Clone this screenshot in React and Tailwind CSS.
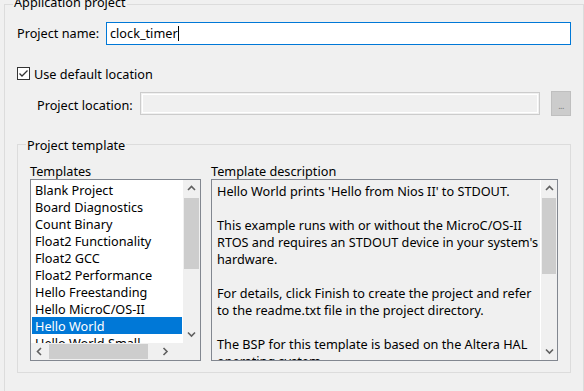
import React from 'react';

const templates = [
    'Blank Project',
    'Board Diagnostics',
    'Count Binary',
    'Float2 Functionality',
    'Float2 GCC',
    'Float2 Performance',
    'Hello Freestanding',
    'Hello MicroC/OS-II',
    'Hello World',
    'Hello World Small',
];

const description = [
    "Hello World prints 'Hello from Nios II' to STDOUT.",
    '',
    'This example runs with or without the MicroC/OS-II',
    "RTOS and requires an STDOUT device in your system's",
    'hardware.',
    '',
    'For details, click Finish to create the project and refer',
    'to the readme.txt file in the project directory.',
    '',
    'The BSP for this template is based on the Altera HAL',
    'operating system.',
];

const Chevron = ({ dir }) => {
    const d = {
        up: 'M1 5 L4.5 1.5 L8 5',
        down: 'M1 1.5 L4.5 5 L8 1.5',
        left: 'M5 1 L1.5 4.5 L5 8',
        right: 'M1.5 1 L5 4.5 L1.5 8',
    }[dir];
    const horiz = dir === 'left' || dir === 'right';
    return (
        <svg width={horiz ? 7 : 9} height={horiz ? 9 : 7} viewBox={horiz ? '0 0 7 9' : '0 0 9 7'}>
            <path d={d} fill="none" stroke="#606060" strokeWidth="1.6" />
        </svg>
    );
};

const VScroll = ({ thumbTop, thumbH, className = '' }) => (
    <div className={`relative w-[17px] h-full bg-[#f0f0f0] flex flex-col ${className}`}>
        <div className="h-[17px] flex items-center justify-center">
            <Chevron dir="up" />
        </div>
        <div className="flex-1 relative">
            <div
                className="absolute left-[1px] right-[1px] bg-[#cdcdcd]"
                style={{ top: thumbTop, height: thumbH }}
            />
        </div>
        <div className="h-[17px] flex items-center justify-center">
            <Chevron dir="down" />
        </div>
    </div>
);

export default function App() {
    return (
        <div
            className="w-[584px] h-[391px] overflow-hidden bg-[#f0f0f0] pt-[4px] pl-[4px] text-[12.7px] text-black"
            style={{ fontFamily: '"Noto Sans", "Liberation Sans", sans-serif' }}
        >
            {/* Application project group */}
            <div className="relative w-[580px] h-[400px] border border-[#dcdcdc] pl-[12px]">
                <span className="absolute left-[8px] top-[-11px] px-[1px] bg-[#f0f0f0] leading-[17px]">
                    Application project
                </span>

                <div className="flex items-center mt-[17px] h-[23px]">
                    <span className="w-[89px] leading-[17px]">Project name:</span>
                    <div className="w-[465px] h-[23px] bg-white border border-[#0078d7] flex items-center pl-[3px]">
                        <span className="leading-[17px]">clock_timer</span>
                        <span className="w-[1px] h-[15px] bg-black" />
                    </div>
                </div>

                <div className="flex items-center mt-[22px] h-[13px]">
                    <div className="w-[13px] h-[13px] bg-white border border-[#333333] flex items-center justify-center">
                        <svg width="11" height="11" viewBox="0 0 11 11">
                            <path d="M1.5 5.5 L4 8 L9.5 2.5" fill="none" stroke="#333333" strokeWidth="1.3" />
                        </svg>
                    </div>
                    <span className="ml-[4px] leading-[17px] pt-[2px]">Use default location</span>
                </div>

                <div className="flex items-center mt-[11px] h-[25px] pl-[20px]">
                    <span className="w-[103px] leading-[17px] pt-[3px]">Project location:</span>
                    <div className="w-[400px] h-[23px] border border-[#cccccc] p-[1px]">
                        <div className="w-full h-full border border-white" />
                    </div>
                    <div className="ml-[11px] w-[20px] h-[25px] bg-[#cccccc] border border-[#bfbfbf] flex items-end justify-center pb-[5px]">
                        <span className="text-[9px] leading-[8px] text-[#7a7a7a] tracking-[-0.5px]">...</span>
                    </div>
                </div>

                {/* Project template group */}
                <div className="relative mt-[28px] w-[554px] h-[229px] border border-[#dcdcdc] pl-[12px]">
                    <span className="absolute left-[8px] top-[-8px] px-[1px] bg-[#f0f0f0] leading-[17px]">
                        Project template
                    </span>

                    <div className="flex gap-[10px] mt-[17px]">
                        <div className="flex flex-col">
                            <span className="h-[17px] leading-[19px]">Templates</span>
                            <div className="w-[171px] h-[182px] border border-[#828790] bg-white flex flex-col">
                                <div className="flex flex-1 min-h-0">
                                    <div className="flex-1 overflow-hidden p-[1px]">
                                        {templates.map((t) => (
                                            <div
                                                key={t}
                                                className={`h-[17px] leading-[19px] pl-[3px] whitespace-nowrap ${
                                                    t === 'Hello World' ? 'bg-[#0078d7] text-white' : ''
                                                }`}
                                            >
                                                {t}
                                            </div>
                                        ))}
                                    </div>
                                    <VScroll thumbTop={1} thumbH={71} />
                                </div>
                                <div className="flex h-[17px]">
                                    <div className="w-[152px] h-[17px] bg-[#f0f0f0] flex items-center">
                                        <div className="w-[17px] flex justify-center">
                                            <Chevron dir="left" />
                                        </div>
                                        <div className="ml-[1px] w-[99px] h-[15px] bg-[#cdcdcd]" />
                                        <div className="flex-1 flex justify-center">
                                            <Chevron dir="right" />
                                        </div>
                                    </div>
                                    <div className="flex-1 bg-[#f0f0f0]" />
                                </div>
                            </div>
                        </div>

                        <div className="flex flex-col">
                            <span className="h-[17px] leading-[19px]">Template description</span>
                            <div className="w-[347px] h-[182px] border border-[#828790] bg-[#f0f0f0] flex">
                                <div className="flex-1 overflow-hidden pl-[5px] pt-[3px]">
                                    {description.map((line, i) => (
                                        <div key={i} className="h-[17px] leading-[17px] whitespace-nowrap">
                                            {line}
                                        </div>
                                    ))}
                                </div>
                                <VScroll thumbTop={1} thumbH={76} className="border-l border-white" />
                            </div>
                        </div>
                    </div>
                </div>
            </div>
        </div>
    );
}
